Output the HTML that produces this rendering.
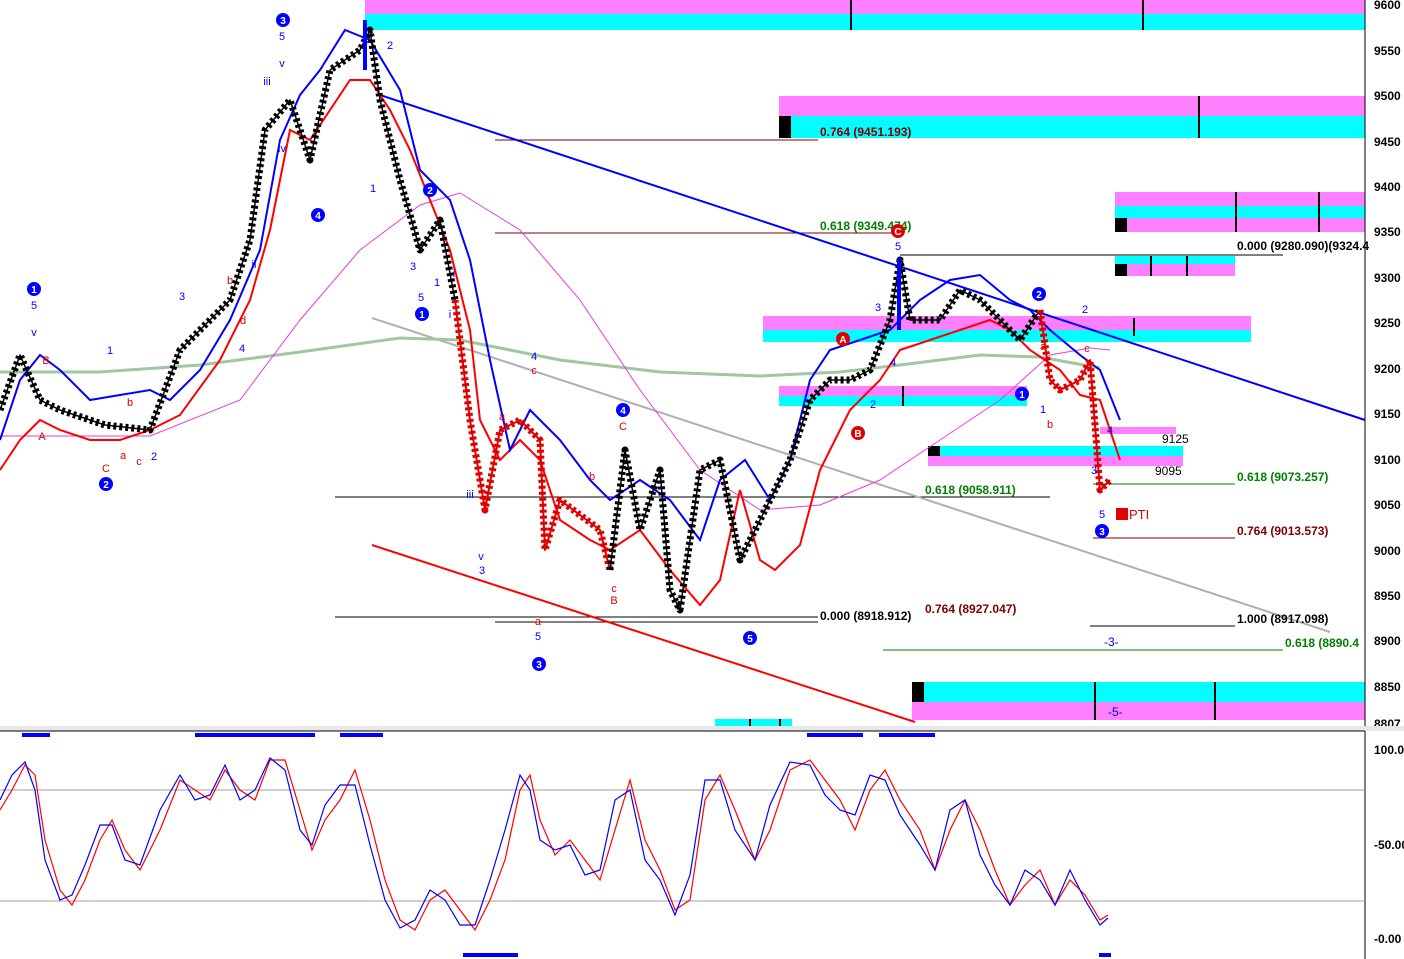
<!DOCTYPE html>
<html><head><meta charset="utf-8"><style>
html,body{margin:0;padding:0;background:#fff;width:1404px;height:959px;overflow:hidden}
svg{display:block;font-family:"Liberation Sans",sans-serif}
</style></head><body>
<svg width="1404" height="959" viewBox="0 0 1404 959" xmlns="http://www.w3.org/2000/svg">
<rect width="1404" height="959" fill="#fff"/>
<!-- bands -->
<rect x="365" y="0" width="1000" height="14" fill="#ff80ff"/><rect x="365" y="14" width="1000" height="16" fill="#00ffff"/>
<rect x="779" y="96" width="586" height="20" fill="#ff80ff"/><rect x="779" y="116" width="586" height="22" fill="#00ffff"/>
<rect x="779" y="116" width="12" height="22" fill="#000"/>
<rect x="1115" y="192" width="250" height="14" fill="#ff80ff"/><rect x="1115" y="206" width="250" height="12" fill="#00ffff"/><rect x="1115" y="218" width="250" height="14" fill="#ff80ff"/>
<rect x="1115" y="218" width="12" height="14" fill="#000"/>
<rect x="1115" y="256" width="120" height="8" fill="#00ffff"/><rect x="1115" y="264" width="120" height="12" fill="#ff80ff"/><rect x="1115" y="264" width="12" height="12" fill="#000"/>
<rect x="763" y="316" width="488" height="14" fill="#ff80ff"/><rect x="763" y="330" width="488" height="12" fill="#00ffff"/>
<rect x="779" y="386" width="248" height="10" fill="#ff80ff"/><rect x="779" y="396" width="248" height="10" fill="#00ffff"/>
<rect x="928" y="446" width="255" height="10" fill="#00ffff"/><rect x="928" y="456" width="255" height="10" fill="#ff80ff"/><rect x="928" y="446" width="12" height="10" fill="#000"/>
<rect x="1100" y="427" width="76" height="7" fill="#ff80ff"/>
<rect x="912" y="682" width="453" height="20" fill="#00ffff"/><rect x="912" y="702" width="453" height="18" fill="#ff80ff"/><rect x="912" y="682" width="12" height="20" fill="#000"/>
<rect x="715" y="719" width="77" height="7" fill="#00ffff"/>
<g stroke="#000" stroke-width="2">
<line x1="851" y1="0" x2="851" y2="30"/><line x1="1143" y1="0" x2="1143" y2="30"/><line x1="1199" y1="96" x2="1199" y2="138"/>
<line x1="1236" y1="192" x2="1236" y2="232"/><line x1="1319" y1="192" x2="1319" y2="232"/><line x1="1151" y1="256" x2="1151" y2="276"/><line x1="1187" y1="256" x2="1187" y2="276"/>
<line x1="1134" y1="318" x2="1134" y2="336"/><line x1="1095" y1="682" x2="1095" y2="720"/><line x1="1215" y1="682" x2="1215" y2="720"/>
<line x1="903" y1="386" x2="903" y2="406"/><line x1="750" y1="719" x2="750" y2="726"/><line x1="780" y1="719" x2="780" y2="726"/>
</g>
<g stroke-width="1">
<line x1="495" y1="140" x2="818" y2="140" stroke="#800000"/>
<line x1="495" y1="233" x2="900" y2="233" stroke="#800000"/>
<line x1="900" y1="255" x2="1283" y2="255" stroke="#000"/>
<line x1="335" y1="497" x2="1050" y2="497" stroke="#000"/>
<line x1="335" y1="617" x2="818" y2="617" stroke="#000"/>
<line x1="495" y1="622" x2="818" y2="622" stroke="#000"/>
<line x1="1093" y1="484" x2="1235" y2="484" stroke="#008000"/>
<line x1="1093" y1="538" x2="1235" y2="538" stroke="#800000"/>
<line x1="1090" y1="626" x2="1235" y2="626" stroke="#000"/>
<line x1="883" y1="650" x2="1283" y2="650" stroke="#008000"/>
</g>
<line x1="380" y1="95" x2="1365" y2="420" stroke="#0000ff" stroke-width="2"/>
<line x1="372" y1="318" x2="1330" y2="632" stroke="#b0b0b0" stroke-width="2"/>
<line x1="372" y1="545" x2="915" y2="722" stroke="#ff0000" stroke-width="2"/>
<polyline fill="none" stroke="#a0c8a0" stroke-width="3" points="0,372 100,372 200,365 300,352 400,338 460,340 560,360 660,372 760,376 840,372 900,365 980,355 1040,357 1100,368"/>
<polyline fill="none" stroke="#e040e0" stroke-width="1" points="0,436 150,436 240,400 300,320 360,250 420,205 460,193 520,230 580,300 640,390 700,470 760,510 820,505 880,480 940,440 1000,400 1050,355 1090,348 1110,350"/>
<polyline fill="none" stroke="#ff0000" stroke-width="2" points="0,470 20,440 40,420 60,430 90,440 120,440 150,430 180,415 220,360 250,300 270,230 290,130 310,140 330,110 350,80 370,80 390,110 410,150 430,200 450,250 470,330 480,420 500,460 520,440 540,460 560,520 590,540 610,550 640,530 670,570 700,605 720,580 740,490 760,560 775,570 800,545 820,470 850,410 880,380 900,350 930,340 960,330 990,320 1010,330 1030,350 1060,370 1080,395 1100,400 1120,460"/>
<polyline fill="none" stroke="#0000ff" stroke-width="2" points="0,440 20,380 40,355 60,370 90,400 120,395 150,390 170,400 200,370 230,320 260,250 280,140 300,95 320,70 345,30 370,40 400,90 420,170 450,200 470,260 490,360 510,450 530,410 560,440 590,480 610,500 640,480 670,500 700,540 720,480 745,460 770,500 790,460 810,380 830,350 860,340 890,330 920,300 950,280 980,275 1010,300 1030,310 1050,330 1080,355 1100,370 1120,420"/>
<!-- price path with candle texture -->
<g fill="none" stroke-linejoin="round">
<polyline stroke="#000" stroke-width="1.5" points="0,410 20,355 40,400 60,410 105,425 150,430 180,350 230,300 250,240 265,130 290,100 310,160 330,70 360,50 370,30 380,100 400,180 420,250 440,220 455,300"/>
<polyline stroke="#000" stroke-width="7" stroke-dasharray="3,3" points="0,410 20,355 40,400 60,410 105,425 150,430 180,350 230,300 250,240 265,130 290,100 310,160 330,70 360,50 370,30 380,100 400,180 420,250 440,220 455,300"/>
<polyline stroke="#e00000" stroke-width="2" points="455,300 470,420 485,510 500,430 520,420 540,440 545,550 560,500 600,530 610,570"/>
<polyline stroke="#e00000" stroke-width="7" stroke-dasharray="3,3" points="455,300 470,420 485,510 500,430 520,420 540,440 545,550 560,500 600,530 610,570"/>
<polyline stroke="#000" stroke-width="1.5" points="610,570 625,450 640,530 660,470 670,590 680,610 700,470 720,460 740,560 760,520 790,460 810,400 830,380 850,380 870,370 890,320 900,260 910,320 940,320 960,290 980,300 1000,320 1020,340 1040,310"/>
<polyline stroke="#000" stroke-width="7" stroke-dasharray="3,3" points="610,570 625,450 640,530 660,470 670,590 680,610 700,470 720,460 740,560 760,520 790,460 810,400 830,380 850,380 870,370 890,320 900,260 910,320 940,320 960,290 980,300 1000,320 1020,340 1040,310"/>
<polyline stroke="#e00000" stroke-width="2" points="1040,310 1050,380 1060,390 1080,380 1090,360 1100,490 1110,480"/>
<polyline stroke="#e00000" stroke-width="7" stroke-dasharray="3,3" points="1040,310 1050,380 1060,390 1080,380 1090,360 1100,490 1110,480"/>
</g>
<line x1="899" y1="258" x2="899" y2="330" stroke="#0000ff" stroke-width="4"/>
<line x1="365" y1="20" x2="365" y2="70" stroke="#0000ff" stroke-width="4"/>
<g font-size="12" font-weight="bold">
<text x="820" y="136" fill="#800000">0.764 (9451.193)</text>
<text x="820" y="230" fill="#008000">0.618 (9349.474)</text>
<text x="1237" y="250" fill="#000">0.000 (9280.090)(9324.4</text>
<text x="925" y="494" fill="#008000">0.618 (9058.911)</text>
<text x="1237" y="481" fill="#008000">0.618 (9073.257)</text>
<text x="1237" y="535" fill="#800000">0.764 (9013.573)</text>
<text x="820" y="620" fill="#000">0.000 (8918.912)</text>
<text x="925" y="613" fill="#800000">0.764 (8927.047)</text>
<text x="1237" y="623" fill="#000">1.000 (8917.098)</text>
<text x="1285" y="647" fill="#008000">0.618 (8890.4</text>
</g>
<g font-size="12" fill="#000"><text x="1162" y="443">9125</text><text x="1155" y="475">9095</text></g>
<text x="1104" y="646" font-size="12" fill="#0000ff">-3-</text><text x="1108" y="716" font-size="12" fill="#0000ff">-5-</text>
<rect x="1116" y="508" width="12" height="12" fill="#e00000"/><text x="1129" y="519" font-size="13" fill="#e00000">PTI</text>
<g font-size="11" font-weight="bold" text-anchor="middle">
<g fill="#0000ff"><circle cx="283" cy="20" r="7"/><circle cx="34" cy="289" r="7"/><circle cx="106" cy="484" r="7"/><circle cx="318" cy="215" r="7"/><circle cx="430" cy="190" r="7"/><circle cx="422" cy="314" r="7"/><circle cx="623" cy="410" r="7"/><circle cx="539" cy="664" r="7"/><circle cx="750" cy="638" r="7"/><circle cx="1039" cy="294" r="7"/><circle cx="1022" cy="394" r="7"/><circle cx="1102" cy="531" r="7"/></g>
<g fill="#e00000"><circle cx="898" cy="231" r="7"/><circle cx="843" cy="339" r="7"/><circle cx="858" cy="433" r="7"/></g>
<g fill="#fff" font-size="10"><text x="283" y="24">3</text><text x="34" y="293">1</text><text x="106" y="488">2</text><text x="318" y="219">4</text><text x="430" y="194">2</text><text x="422" y="318">1</text><text x="623" y="414">4</text><text x="539" y="668">3</text><text x="750" y="642">5</text><text x="1039" y="298">2</text><text x="1022" y="398">1</text><text x="1102" y="535">3</text><text x="898" y="235">C</text><text x="843" y="343">A</text><text x="858" y="437">B</text></g>
<g fill="#0000ff" font-weight="normal"><text x="282" y="40">5</text><text x="34" y="309">5</text><text x="34" y="336">v</text><text x="282" y="67">v</text><text x="267" y="85">iii</text><text x="282" y="152">iv</text><text x="254" y="268">ii</text><text x="390" y="49">2</text><text x="373" y="192">1</text><text x="413" y="270">3</text><text x="421" y="301">5</text><text x="437" y="286">1</text><text x="454" y="277">i</text><text x="450" y="318">i</text><text x="481" y="560">v</text><text x="482" y="574">3</text><text x="470" y="498">iii</text><text x="534" y="360">4</text><text x="538" y="640">5</text><text x="182" y="300">3</text><text x="110" y="354">1</text><text x="154" y="460">2</text><text x="242" y="352">4</text><text x="878" y="311">3</text><text x="898" y="250">5</text><text x="893" y="366">4</text><text x="873" y="408">2</text><text x="1085" y="313">2</text><text x="1043" y="413">1</text><text x="1094" y="474">3</text><text x="1102" y="518">5</text><text x="1110" y="434">4</text></g>
<g fill="#e00000" font-weight="normal"><text x="46" y="364">B</text><text x="42" y="440">A</text><text x="106" y="472">C</text><text x="123" y="459">a</text><text x="130" y="406">b</text><text x="139" y="465">c</text><text x="230" y="284">b</text><text x="243" y="324">d</text><text x="534" y="374">c</text><text x="538" y="625">a</text><text x="502" y="420">a</text><text x="623" y="430">C</text><text x="614" y="604">B</text><text x="614" y="592">c</text><text x="592" y="480">b</text><text x="1050" y="428">b</text><text x="1087" y="352">c</text><text x="1043" y="350">a</text></g>
</g>
<line x1="1365" y1="0" x2="1365" y2="959" stroke="#000"/>
<g font-size="12" font-weight="bold" fill="#000">
<text x="1374" y="9">9600</text><text x="1374" y="55">9550</text><text x="1374" y="100">9500</text><text x="1374" y="146">9450</text><text x="1374" y="191">9400</text><text x="1374" y="236">9350</text><text x="1374" y="282">9300</text><text x="1374" y="327">9250</text><text x="1374" y="373">9200</text><text x="1374" y="418">9150</text><text x="1374" y="464">9100</text><text x="1374" y="509">9050</text><text x="1374" y="555">9000</text><text x="1374" y="600">8950</text><text x="1374" y="645">8900</text><text x="1374" y="691">8850</text><text x="1374" y="728">8807</text>
<text x="1374" y="754">100.0</text><text x="1374" y="849">-50.00</text><text x="1374" y="943">-0.00</text></g>
<rect x="0" y="726" width="1404" height="5" fill="#e8e8e8"/><line x1="0" y1="731" x2="1365" y2="731" stroke="#000"/>
<g fill="#0000ff"><rect x="22" y="733" width="28" height="4"/><rect x="195" y="733" width="120" height="4"/><rect x="340" y="733" width="43" height="4"/><rect x="807" y="733" width="56" height="4"/><rect x="879" y="733" width="56" height="4"/><rect x="463" y="953" width="55" height="4"/><rect x="1099" y="953" width="12" height="4"/></g>
<line x1="0" y1="790" x2="1365" y2="790" stroke="#a0a0a0"/><line x1="0" y1="901" x2="1365" y2="901" stroke="#a0a0a0"/>
<polyline fill="none" stroke="#ff0000" stroke-width="1.2" points="0,810 12,790 25,765 35,775 45,840 60,890 72,905 85,880 100,840 112,820 125,850 140,870 160,830 180,780 195,790 210,800 225,770 240,790 255,800 270,760 285,760 300,810 312,850 325,820 340,800 355,770 370,820 385,880 400,920 415,930 430,900 445,890 460,910 475,930 490,900 505,860 520,790 530,775 540,820 555,855 570,840 585,860 600,880 615,830 630,780 645,840 660,870 675,910 690,900 705,800 720,775 735,810 755,860 770,830 790,770 810,760 825,780 840,800 855,830 870,790 885,770 900,800 920,830 935,870 950,830 965,800 980,830 995,870 1010,905 1025,885 1040,870 1055,905 1070,880 1085,895 1100,920 1108,915"/>
<polyline fill="none" stroke="#0000ff" stroke-width="1.2" points="0,800 12,775 25,762 35,790 45,860 60,900 72,895 85,865 100,825 112,825 125,860 140,865 160,810 180,775 195,800 210,795 225,765 240,800 255,790 270,758 285,770 300,830 312,845 325,805 340,785 355,785 370,845 385,900 400,928 415,920 430,890 445,900 460,925 475,925 490,880 505,830 520,775 530,790 540,840 555,850 570,845 585,875 600,870 615,800 630,790 645,860 660,880 675,915 690,875 705,780 720,780 735,830 755,860 770,805 790,762 810,765 825,795 840,810 855,815 870,775 885,780 900,815 920,845 935,870 950,810 965,800 980,855 995,885 1010,905 1025,870 1040,880 1055,905 1070,870 1085,900 1100,925 1108,918"/>
</svg>
</body></html>
